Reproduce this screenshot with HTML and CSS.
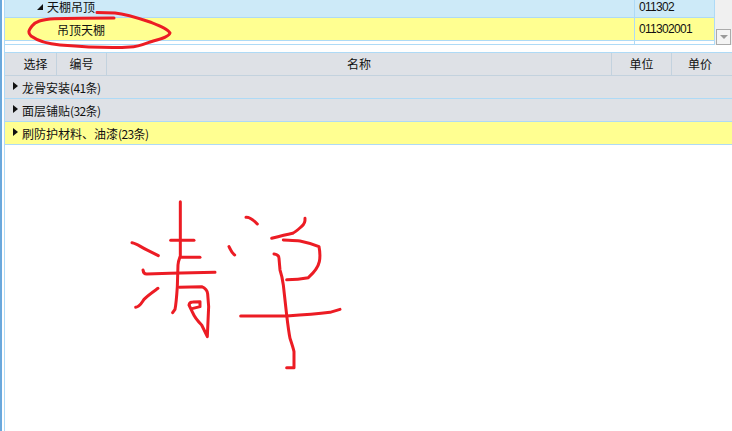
FILE: index.html
```html
<!DOCTYPE html>
<html lang="zh-CN">
<head>
<meta charset="utf-8">
<title>清单</title>
<link rel="stylesheet" href="styles.css">
</head>
<body>
<div class="page">
  <section class="tree">
    <div class="tree-grid">
      <div class="tree-row current">
        <div class="tree-name level-1"><span class="tri-open"></span><span class="tree-label">天棚吊顶</span></div>
        <div class="tree-code">011302</div>
      </div>
      <div class="tree-row selected">
        <div class="tree-name level-2">吊顶天棚</div>
        <div class="tree-code">011302001</div>
      </div>
      <div class="tree-row stub">
        <div class="tree-name"></div>
        <div class="tree-code"></div>
      </div>
    </div>
    <div class="scroll">
      <div class="scroll-btn"><span class="scroll-arrow"></span></div>
    </div>
  </section>
  <section class="list">
    <div class="list-head">
      <div class="hc first">选择</div>
      <div class="hc">编号</div>
      <div class="hc">名称</div>
      <div class="hc">单位</div>
      <div class="hc last">单价</div>
    </div>
    <div class="group"><span class="tri-closed"></span>龙骨安装<span class="count">(41条)</span></div>
    <div class="group"><span class="tri-closed"></span>面层铺贴<span class="count">(32条)</span></div>
    <div class="group active"><span class="tri-closed"></span>刷防护材料、油漆<span class="count">(23条)</span></div>
  </section>
</div>
<svg class="ink" viewBox="0 0 732 431" aria-hidden="true">
  <path class="pen" d="M97 12.5 L115 13 C125 14 135 17 150 22 C160 26 168 29 170 33 C169 37 160 39 150 42 C142 45 137 47 130 47 C115 48 85 47 60 45 C48 44 38 41 31 36 C28 33 28 31 32 26 C36 21 42 20 50 19 C65 18 90 18 114 18"/>
  <g transform="translate(120 190) scale(.3333)">
    <path class="pen-z" d="M181 35 L181 198 C178 206 175 212 174 225 L172 290 C170 320 168 345 165 358 L158 368"/>
    <path class="pen-z" d="M152 151 L222 151"/>
    <path class="pen-z" d="M182 202 L240 202"/>
    <path class="pen-z" d="M69 240 C70 248 74 252 80 252 L150 250 L285 247"/>
    <path class="pen-z" d="M36 158 C50 160 60 170 85 182 L115 197"/>
    <path class="pen-z" d="M114 295 C100 305 85 315 72 328 C65 338 60 350 47 352"/>
    <path class="pen-z" d="M178 292 L245 290 C255 294 262 300 263 312 L266 350 L262 440 C255 425 250 415 245 405 C235 395 225 385 218 368 L207 345 C208 340 212 336 218 336 L240 335 L240 350 L216 356"/>
  </g>
  <g transform="translate(220 205) scale(.3333)">
    <path class="pen-z" d="M78 37 C90 36 100 45 112 57"/>
    <path class="pen-z" d="M255 40 C256 50 252 58 245 64 C235 73 228 80 218 85 C195 90 175 95 155 100"/>
    <path class="pen-z" d="M27 125 C32 135 36 145 44 150"/>
    <path class="pen-z" d="M190 105 C210 106 225 106 240 108 C260 112 280 118 297 125 C300 140 301 155 298 170 C295 185 285 200 265 218 C245 222 220 224 200 224"/>
    <path class="pen-z" d="M162 147 C170 148 177 152 177 160 L180 195 C185 210 188 225 190 240 L200 330 C203 355 206 380 210 400 C215 415 220 430 222 440 L222 488 L200 488"/>
    <path class="pen-z" d="M62 333 L200 333 C250 330 290 327 330 322 L360 313"/>
  </g>
</svg>
</body>
</html>
```
FILE: styles.css
```css
* { box-sizing: border-box; }
html, body {
  margin: 0;
  width: 732px;
  height: 431px;
  overflow: hidden;
  background: #fff;
}
body {
  font-family: "Noto Sans CJK SC", "Liberation Sans", sans-serif;
  font-size: 12px;
  color: #111;
  border-left: 2px solid #6aa8dc;
  padding-left: 2px;
  position: relative;
}
.page {
  display: flex;
  flex-direction: column;
  gap: 7px;
  height: 431px;
  border-left: 1px solid #aedaf6;
}
.tree {
  display: flex;
  height: 45px;
}
.tree-grid {
  width: 710px;
  display: flex;
  flex-direction: column;
}
.tree-row {
  display: grid;
  grid-template-columns: 630px 1fr;
  border-bottom: 1px solid #aedaf6;
}
.tree-row.current {
  height: 18px;
  background: #cdeaf8;
}
.tree-row.selected {
  height: 23px;
  background: #ffff91;
}
.tree-row.stub {
  height: 4px;
  background: #fff;
}
.tree-name {
  border-right: 1px solid #aedaf6;
  overflow: hidden;
}
.tree-code {
  padding-left: 4px;
  overflow: hidden;
  border-right: 1px solid #aedaf6;
  font-family: "Liberation Sans", sans-serif;
  font-size: 12px;
  letter-spacing: -0.7px;
}
.tree-row.current .tree-code { line-height: 14px; }
.tree-row.selected .tree-name,
.tree-row.selected .tree-code { line-height: 23px; }
.level-1 {
  padding-left: 32px;
  display: flex;
  align-items: flex-start;
}
.tree-label { line-height: 14px; }
.level-2 { padding-left: 52px; }
.tri-open {
  width: 0;
  height: 0;
  margin: 4px 4px 0 0;
  border-left: 6px solid transparent;
  border-bottom: 6px solid #111;
}
.scroll {
  width: 17px;
  background: #f0f0f0;
  display: flex;
  flex-direction: column;
  justify-content: flex-end;
  padding: 0 1px;
}
.scroll-btn {
  height: 16px;
  background: #f4f4f4;
  border: 1px solid #ababab;
  display: flex;
  align-items: center;
  justify-content: center;
}
.scroll-arrow {
  width: 0;
  height: 0;
  border-left: 4px solid transparent;
  border-right: 4px solid transparent;
  border-top: 4px solid #9a9a9a;
}
.list {
  display: flex;
  flex-direction: column;
}
.list-head {
  height: 24px;
  display: grid;
  grid-template-columns: 52px 50px 505px 60px 1fr;
  background: #dee1e6;
  border-top: 1px solid #aedaf6;
  border-bottom: 1px solid #c3d2de;
}
.hc {
  text-align: center;
  line-height: 22px;
  border-right: 1px solid #c3d2de;
}
.hc.first { padding-left: 10px; }
.hc.last { border-right: 0; padding-right: 4px; }
.group {
  height: 23px;
  padding-left: 8px;
  background: #dee1e6;
  border-bottom: 1px solid #aedaf6;
  display: flex;
  align-items: center;
  white-space: nowrap;
}
.group.active { background: #ffff91; }
.count { letter-spacing: -0.6px; }
.tri-closed {
  width: 0;
  height: 0;
  margin-right: 4px;
  margin-bottom: 2px;
  border-top: 4px solid transparent;
  border-bottom: 4px solid transparent;
  border-left: 5px solid #111;
}
.ink {
  position: absolute;
  left: -2px;
  top: 0;
  width: 732px;
  height: 431px;
  pointer-events: none;
}
.pen, .pen-z {
  fill: none;
  stroke: #ec1c24;
  stroke-linecap: round;
  stroke-linejoin: round;
}
.pen { stroke-width: 3; }
.pen-z { stroke-width: 9; }
```
